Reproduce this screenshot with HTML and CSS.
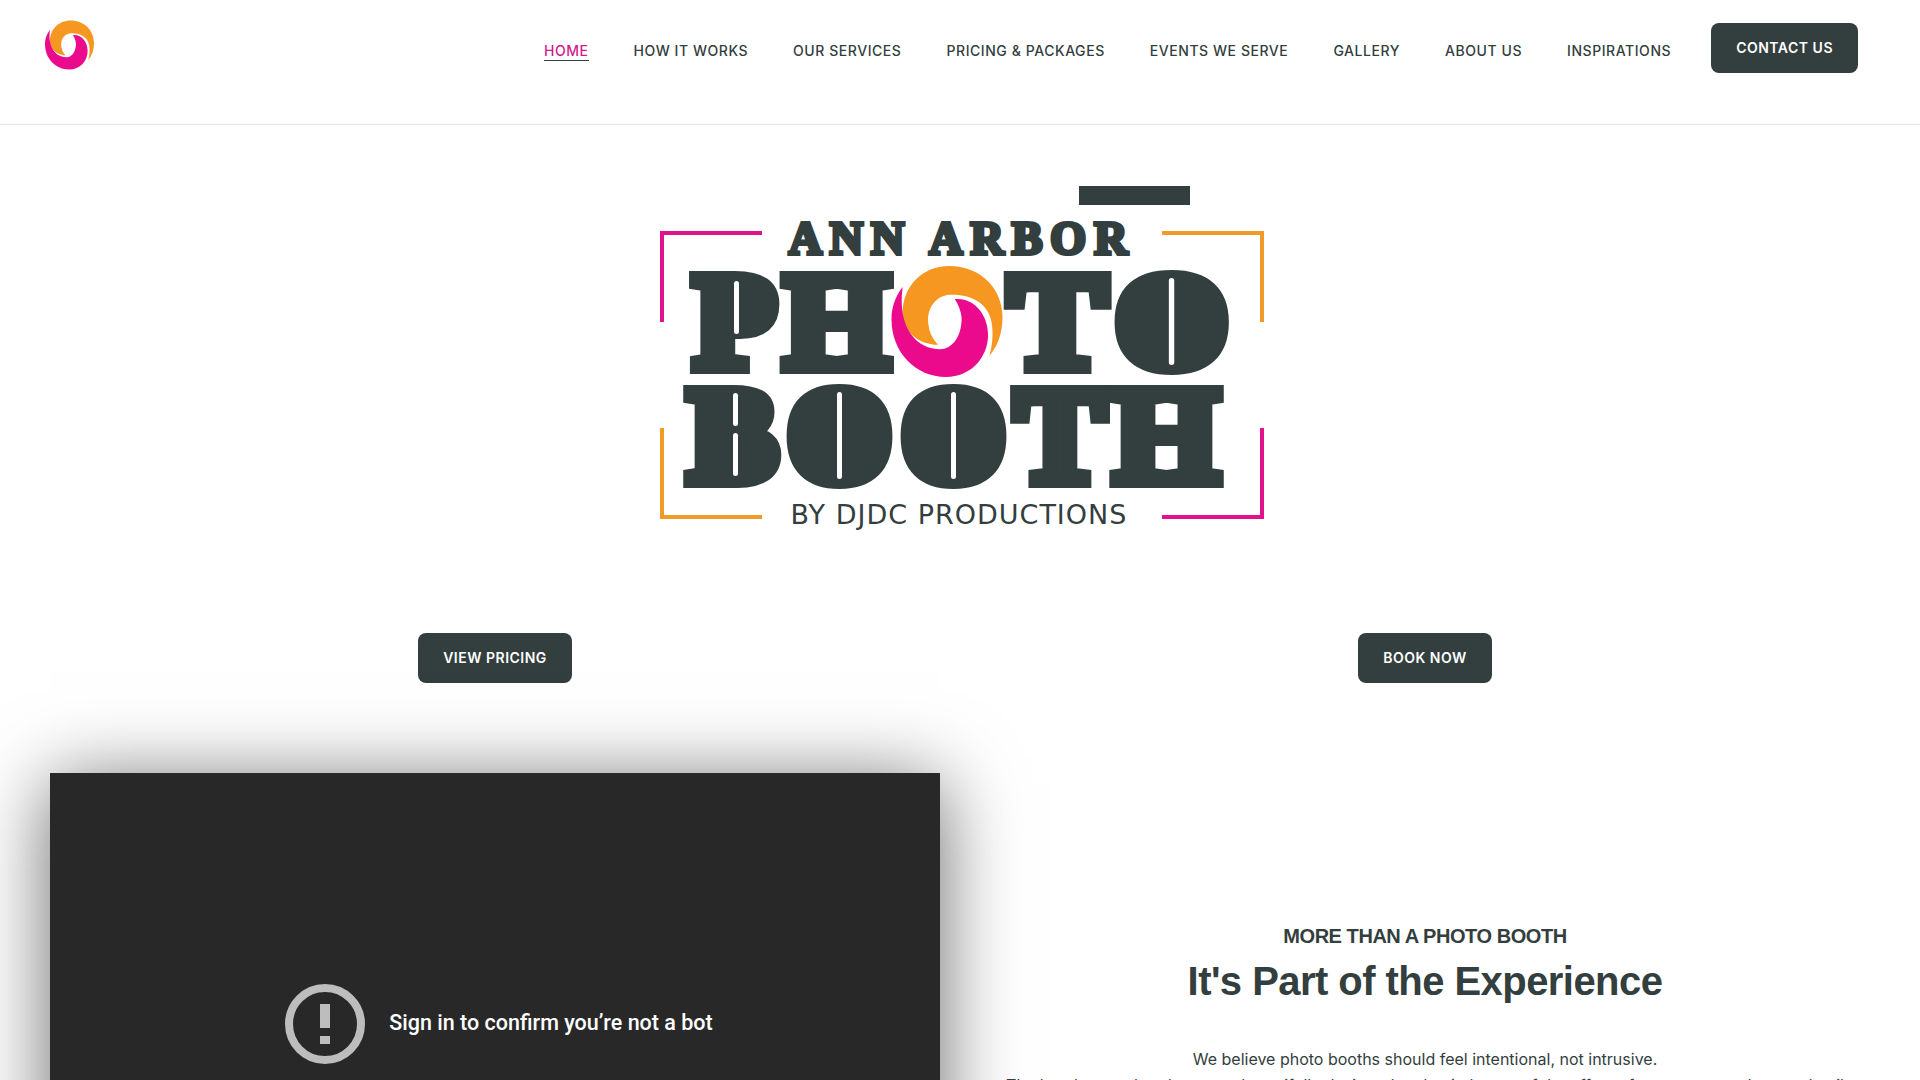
FILE: index.html
```html
<!DOCTYPE html>
<html>
<head>
    <title>Ann Arbor Photo Booth</title>
    <link rel="stylesheet" href="styles.css">
</head>
<body>
    <header class="site-header">
        <a class="site-logo" href="#">
            <svg class="swirl" viewBox="0 0 100 100">
                <path class="swirl-orange" d="M10 43C10 18 28 0 52 0C80 0 100 20 100 46C100 60 96 72 88 81C91 72 92 60 90 50C87 34 72 25 52 26C40 27 32 38 33 51C34 60 37 66 42 71C26 71 10 60 10 43Z"/>
                <path class="swirl-pink" d="M10 19C3 28 0 38 0 48C0 78 22 100 49 100C72 100 87 82 87 62C87 44 74 28 57 30C61 36 64 44 63 51C62 65 54 75 44 75C24 75 5 58 10 19Z"/>
            </svg>
        </a>
        <nav class="main-nav">
            <a class="nav-link active" href="#">Home</a>
            <a class="nav-link" href="#">How It Works</a>
            <a class="nav-link" href="#">Our Services</a>
            <a class="nav-link" href="#">Pricing &amp; Packages</a>
            <a class="nav-link" href="#">Events We Serve</a>
            <a class="nav-link" href="#">Gallery</a>
            <a class="nav-link" href="#">About Us</a>
            <a class="nav-link" href="#">Inspirations</a>
        </nav>
        <a class="btn nav-btn" href="#">Contact Us</a>
    </header>

    <section class="hero">
        <div class="hero-tab"></div>
        <div class="brand">
            <span class="corner corner-tl"></span>
            <span class="corner corner-tr"></span>
            <span class="corner corner-bl"></span>
            <span class="corner corner-br"></span>
            <div class="brand-small">ANN ARBOR</div>
            <div class="brand-big brand-photo">
                <span class="ltr">P<i class="slit slit-p"></i></span><span class="ltr">H</span>
                <svg class="swirl brand-swirl" viewBox="0 0 100 100">
                    <path class="swirl-orange" d="M10 43C10 18 28 0 52 0C80 0 100 20 100 46C100 60 96 72 88 81C91 72 92 60 90 50C87 34 72 25 52 26C40 27 32 38 33 51C34 60 37 66 42 71C26 71 10 60 10 43Z"/>
                    <path class="swirl-pink" d="M10 19C3 28 0 38 0 48C0 78 22 100 49 100C72 100 87 82 87 62C87 44 74 28 57 30C61 36 64 44 63 51C62 65 54 75 44 75C24 75 5 58 10 19Z"/>
                </svg>
                <div class="brand-to"><span class="ltr">T</span><span class="ltr">O<i class="slit slit-o"></i></span></div>
            </div>
            <div class="brand-big brand-booth"><span class="ltr">B<i class="slit slit-b1"></i><i class="slit slit-b2"></i></span><span class="ltr">O<i class="slit slit-o"></i></span><span class="ltr">O<i class="slit slit-o"></i></span><span class="ltr">T</span><span class="ltr">H</span></div>
            <div class="brand-by">BY DJDC PRODUCTIONS</div>
        </div>
    </section>

    <section class="columns">
        <div class="col">
            <a class="btn" href="#">View Pricing</a>
            <div class="video-box">
                <svg class="video-icon" viewBox="0 0 80 80">
                    <circle cx="40" cy="40" r="36" fill="none" stroke="#bdbdbd" stroke-width="8"/>
                    <rect x="35" y="20" width="10" height="24" fill="#bdbdbd"/>
                    <rect x="35" y="52" width="10" height="8" fill="#bdbdbd"/>
                </svg>
                <span class="video-msg">Sign in to confirm you’re not a bot</span>
            </div>
        </div>
        <div class="col">
            <a class="btn" href="#">Book Now</a>
            <div class="intro">
                <h3>MORE THAN A PHOTO BOOTH</h3>
                <h2>It's Part of the Experience</h2>
                <p>We believe photo booths should feel intentional, not intrusive.</p>
                <p>The booths are already set up, beautifully designed and quietly part of the effect of your event and every detail</p>
            </div>
        </div>
    </section>
</body>
</html>
```

FILE: styles.css
```css
html, body {
    height: 1080px;
    overflow: hidden;
}
body {
    margin: 0;
    background: #fff;
    color: #333e3e;
    font-family: Inter, Arial, sans-serif;
}
a {
    text-decoration: none;
}
.site-header {
    display: flex;
    align-items: flex-start;
    height: 124px;
    padding: 0 62px 0 45px;
    border-bottom: 1px solid #e6e6e6;
}
.site-logo {
    margin-top: 20px;
}
.swirl {
    display: block;
    width: 49px;
    height: 50px;
}
.swirl-orange {
    fill: #f59720;
}
.swirl-pink {
    fill: #ec0a8c;
}
.main-nav {
    display: flex;
    gap: 45px;
    margin: 42px 0 0 auto;
}
.nav-link {
    color: #333e3e;
    font-size: 14px;
    font-weight: 500;
    line-height: 18px;
    letter-spacing: 0.56px;
    text-transform: uppercase;
}
.nav-link.active {
    color: #d01c8b;
    border-bottom: 1px solid #333e3e;
}
.btn {
    display: inline-block;
    box-sizing: border-box;
    height: 50px;
    padding: 0 25px;
    border-radius: 8px;
    background: #333e3e;
    color: #fff;
    font-size: 14px;
    font-weight: 600;
    line-height: 50px;
    letter-spacing: 0.5px;
    text-transform: uppercase;
}
.nav-btn {
    margin: 23px 0 0 40px;
}
.hero {
    display: flex;
    flex-direction: column;
    align-items: center;
    height: 508px;
}
.hero-tab {
    align-self: flex-start;
    width: 111px;
    height: 19px;
    margin: 61px 0 0 1079px;
    background: #333e3e;
}
.brand {
    position: relative;
    display: flex;
    flex-direction: column;
    align-items: center;
    width: 604px;
    height: 311px;
    margin: 10px 0 0 4px;
    color: #333e3e;
    font-family: "Liberation Serif", serif;
    font-weight: 700;
}
.corner {
    position: absolute;
    box-sizing: border-box;
    width: 102px;
    height: 91px;
    border: 0 solid;
}
.corner-tl {
    left: 0;
    top: 16px;
    border-top-width: 4px;
    border-left-width: 4px;
    border-color: #e0128c;
}
.corner-tr {
    right: 0;
    top: 16px;
    border-top-width: 4px;
    border-right-width: 4px;
    border-color: #f09a28;
}
.corner-bl {
    left: 0;
    bottom: 7px;
    border-bottom-width: 4px;
    border-left-width: 4px;
    border-color: #f09a28;
}
.corner-br {
    right: 0;
    bottom: 7px;
    border-bottom-width: 4px;
    border-right-width: 4px;
    border-color: #e0128c;
}
.brand-small {
    height: 35px;
    margin: 6px 0 1px;
    font-size: 46px;
    line-height: 35px;
    letter-spacing: 8px;
    white-space: nowrap;
    -webkit-text-stroke: 4px #333e3e;
}
.brand-big {
    display: flex;
    align-items: center;
    justify-content: center;
    height: 105px;
    font-size: 135px;
    line-height: 105px;
    letter-spacing: 9px;
    white-space: nowrap;
    -webkit-text-stroke: 14px #333e3e;
}
.brand-photo {
    margin: 12px 0 0 -10px;
    letter-spacing: 8px;
}
.brand-booth {
    margin: 9px 0 0 -8px;
}
.brand-swirl {
    flex: none;
    width: 112px;
    height: 111px;
    margin: 0 6px 0 -6px;
}
.brand-to {
    display: flex;
    transform: scaleX(1.08);
    transform-origin: left center;
}
.ltr {
    position: relative;
    display: block;
}
/* dark plug over a letter counter, with the white stencil slit in its middle */
.slit {
    position: absolute;
    width: 26px;
    border-radius: 8px;
    background: #333e3e;
}
.slit::before {
    content: "";
    position: absolute;
    top: 0;
    bottom: 0;
    left: 50%;
    width: 5px;
    margin-left: -2.5px;
    border-radius: 3px;
    background: #fff;
}
.slit-o {
    left: calc(50% - 25px);
    top: 9px;
    width: 42px;
    height: 87px;
}
.slit-p {
    left: 30px;
    top: 12px;
    height: 53px;
}
.slit-b1 {
    left: 35px;
    top: 10px;
    height: 33px;
}
.slit-b2 {
    left: 35px;
    top: 50px;
    height: 43px;
}
.brand-by {
    height: 24px;
    margin: 15px 0 0 -6px;
    font-family: "DejaVu Sans", sans-serif;
    font-weight: 400;
    font-size: 27px;
    line-height: 24px;
    letter-spacing: 1px;
    white-space: nowrap;
}
.columns {
    display: flex;
    gap: 40px;
    padding: 0 50px;
}
.col {
    display: flex;
    flex-direction: column;
    align-items: center;
    flex: 1;
    min-width: 0;
}
.video-box {
    display: flex;
    align-items: center;
    justify-content: center;
    gap: 24px;
    align-self: stretch;
    height: 500px;
    margin-top: 90px;
    padding-left: 8px;
    background: #282828;
    box-shadow: 0 10px 75px rgba(0, 0, 0, 0.6);
}
.video-icon {
    width: 80px;
    height: 80px;
    margin-top: 2px;
}
.video-msg {
    margin-bottom: 2px;
    color: #fff;
    font-family: Roboto, Arial, sans-serif;
    font-size: 21.5px;
    font-weight: 500;
}
.intro {
    align-self: stretch;
    margin-top: 239px;
    text-align: center;
}
.intro h3 {
    margin: 0;
    font-family: "Liberation Sans", Arial, sans-serif;
    font-size: 20px;
    font-weight: 700;
    line-height: 28px;
    letter-spacing: -0.45px;
}
.intro h2 {
    margin: 7px 0 0;
    font-family: "Liberation Sans", Arial, sans-serif;
    font-size: 40px;
    font-weight: 700;
    line-height: 48px;
    letter-spacing: -0.55px;
}
.intro p {
    margin: 0;
    font-size: 16px;
    line-height: 26px;
    white-space: nowrap;
}
.intro h2 + p {
    margin-top: 41px;
}
```
